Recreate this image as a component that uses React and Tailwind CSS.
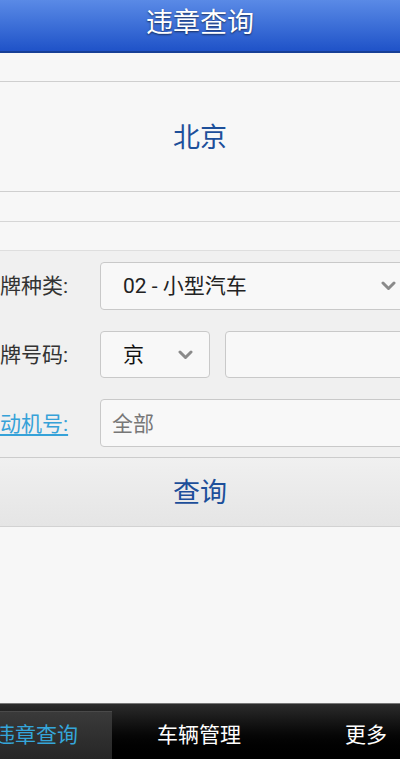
import React from "react";

function Chevron({ className }) {
  return (
    <svg className={className} width="15" height="10" viewBox="0 0 15 10">
      <path d="M2 2 L7.5 7.5 L13 2" fill="none" stroke="#8a8a8a" strokeWidth="3" strokeLinecap="round" strokeLinejoin="round" />
    </svg>
  );
}

export default function App() {
  return (
    <div className="w-[400px] h-[759px] overflow-hidden flex flex-col bg-[#f7f7f7] font-['Roboto','Noto_Sans_CJK_SC',sans-serif]">
      {/* Header */}
      <div className="h-[53px] shrink-0 flex items-center justify-center bg-gradient-to-b from-[#5a8ae6] to-[#1f52c8] border-b-2 border-[#173f96]">
        <span className="text-white text-[27px] leading-none [text-shadow:0_1px_2px_rgba(0,0,0,0.6)] -mt-[4px]">违章查询</span>
      </div>
      <div className="h-[29px] shrink-0 border-b border-[#cfcfcf]" />
      {/* City */}
      <div className="h-[110px] shrink-0 flex items-center justify-center border-b border-[#cfcfcf]">
        <span className="text-[#1d4f9a] text-[27px] leading-none mt-[3px]">北京</span>
      </div>
      <div className="h-[30px] shrink-0 border-b border-[#d6d6d6]" />
      <div className="h-[29px] shrink-0 border-b border-[#dedede]" />
      {/* Form */}
      <div className="shrink-0 bg-[#f0f0f0]">
        <div className="h-[69px] flex items-center">
          <div className="w-[100px] shrink-0 text-[21px] text-[#333] leading-none whitespace-nowrap mt-[2px]">牌种类:</div>
          <div className="w-[310px] shrink-0 h-[48px] rounded-[4px] border border-[#c9c9c9] bg-[#f8f8f8] flex items-center pl-[22px] pr-[8px]">
            <span className="text-[21px] text-[#222] leading-none whitespace-nowrap mt-[2px]">02 - 小型汽车</span>
            <Chevron className="ml-auto mr-[5px]" />
          </div>
        </div>
        <div className="h-[69px] flex items-center">
          <div className="w-[100px] shrink-0 text-[21px] text-[#333] leading-none whitespace-nowrap mt-[2px]">牌号码:</div>
          <div className="w-[110px] shrink-0 h-[47px] rounded-[4px] border border-[#c9c9c9] bg-[#f8f8f8] flex items-center pl-[22px]">
            <span className="text-[21px] text-[#111] leading-none mt-[2px]">京</span>
            <Chevron className="ml-[34px]" />
          </div>
          <div className="ml-[15px] w-[200px] shrink-0 h-[47px] rounded-[4px] border border-[#c9c9c9] bg-[#f8f8f8]" />
        </div>
        <div className="h-[69px] flex items-center border-b border-[#cccccc]">
          <div className="w-[100px] shrink-0 text-[21px] text-[#36a2d8] leading-none underline underline-offset-[3px] whitespace-nowrap mt-[2px]">动机号:</div>
          <div className="w-[310px] shrink-0 h-[48px] rounded-[4px] border border-[#c9c9c9] bg-[#f8f8f8] flex items-center pl-[11px]">
            <span className="text-[21px] text-[#777] leading-none mt-[2px]">全部</span>
          </div>
        </div>
      </div>
      {/* Button */}
      <div className="h-[69px] shrink-0 flex items-center justify-center bg-gradient-to-b from-[#f0f0f0] to-[#e5e5e5] border-b border-[#d2d2d2]">
        <span className="text-[#1d4f9a] text-[27px] leading-none mt-[2px]">查询</span>
      </div>
      <div className="flex-1" />
      {/* Tab bar */}
      <div className="h-[56px] shrink-0 flex border-t border-[#777] bg-gradient-to-b from-[#2c2c2c] via-[#0a0a0a] to-black">
        <div className="w-[112px] shrink-0 mt-[7px] bg-gradient-to-b from-[#3a3a3a] to-[#262626] border-t border-[#4a4a4a] flex items-center justify-end pr-[34px]">
          <span className="text-[#35a6da] text-[21px] leading-none whitespace-nowrap">违章查询</span>
        </div>
        <div className="flex-1 flex items-center pt-[8px]">
          <span className="ml-[45px] text-white text-[21px] leading-none whitespace-nowrap">车辆管理</span>
          <span className="ml-auto mr-[13px] text-white text-[21px] leading-none whitespace-nowrap">更多</span>
        </div>
      </div>
    </div>
  );
}
